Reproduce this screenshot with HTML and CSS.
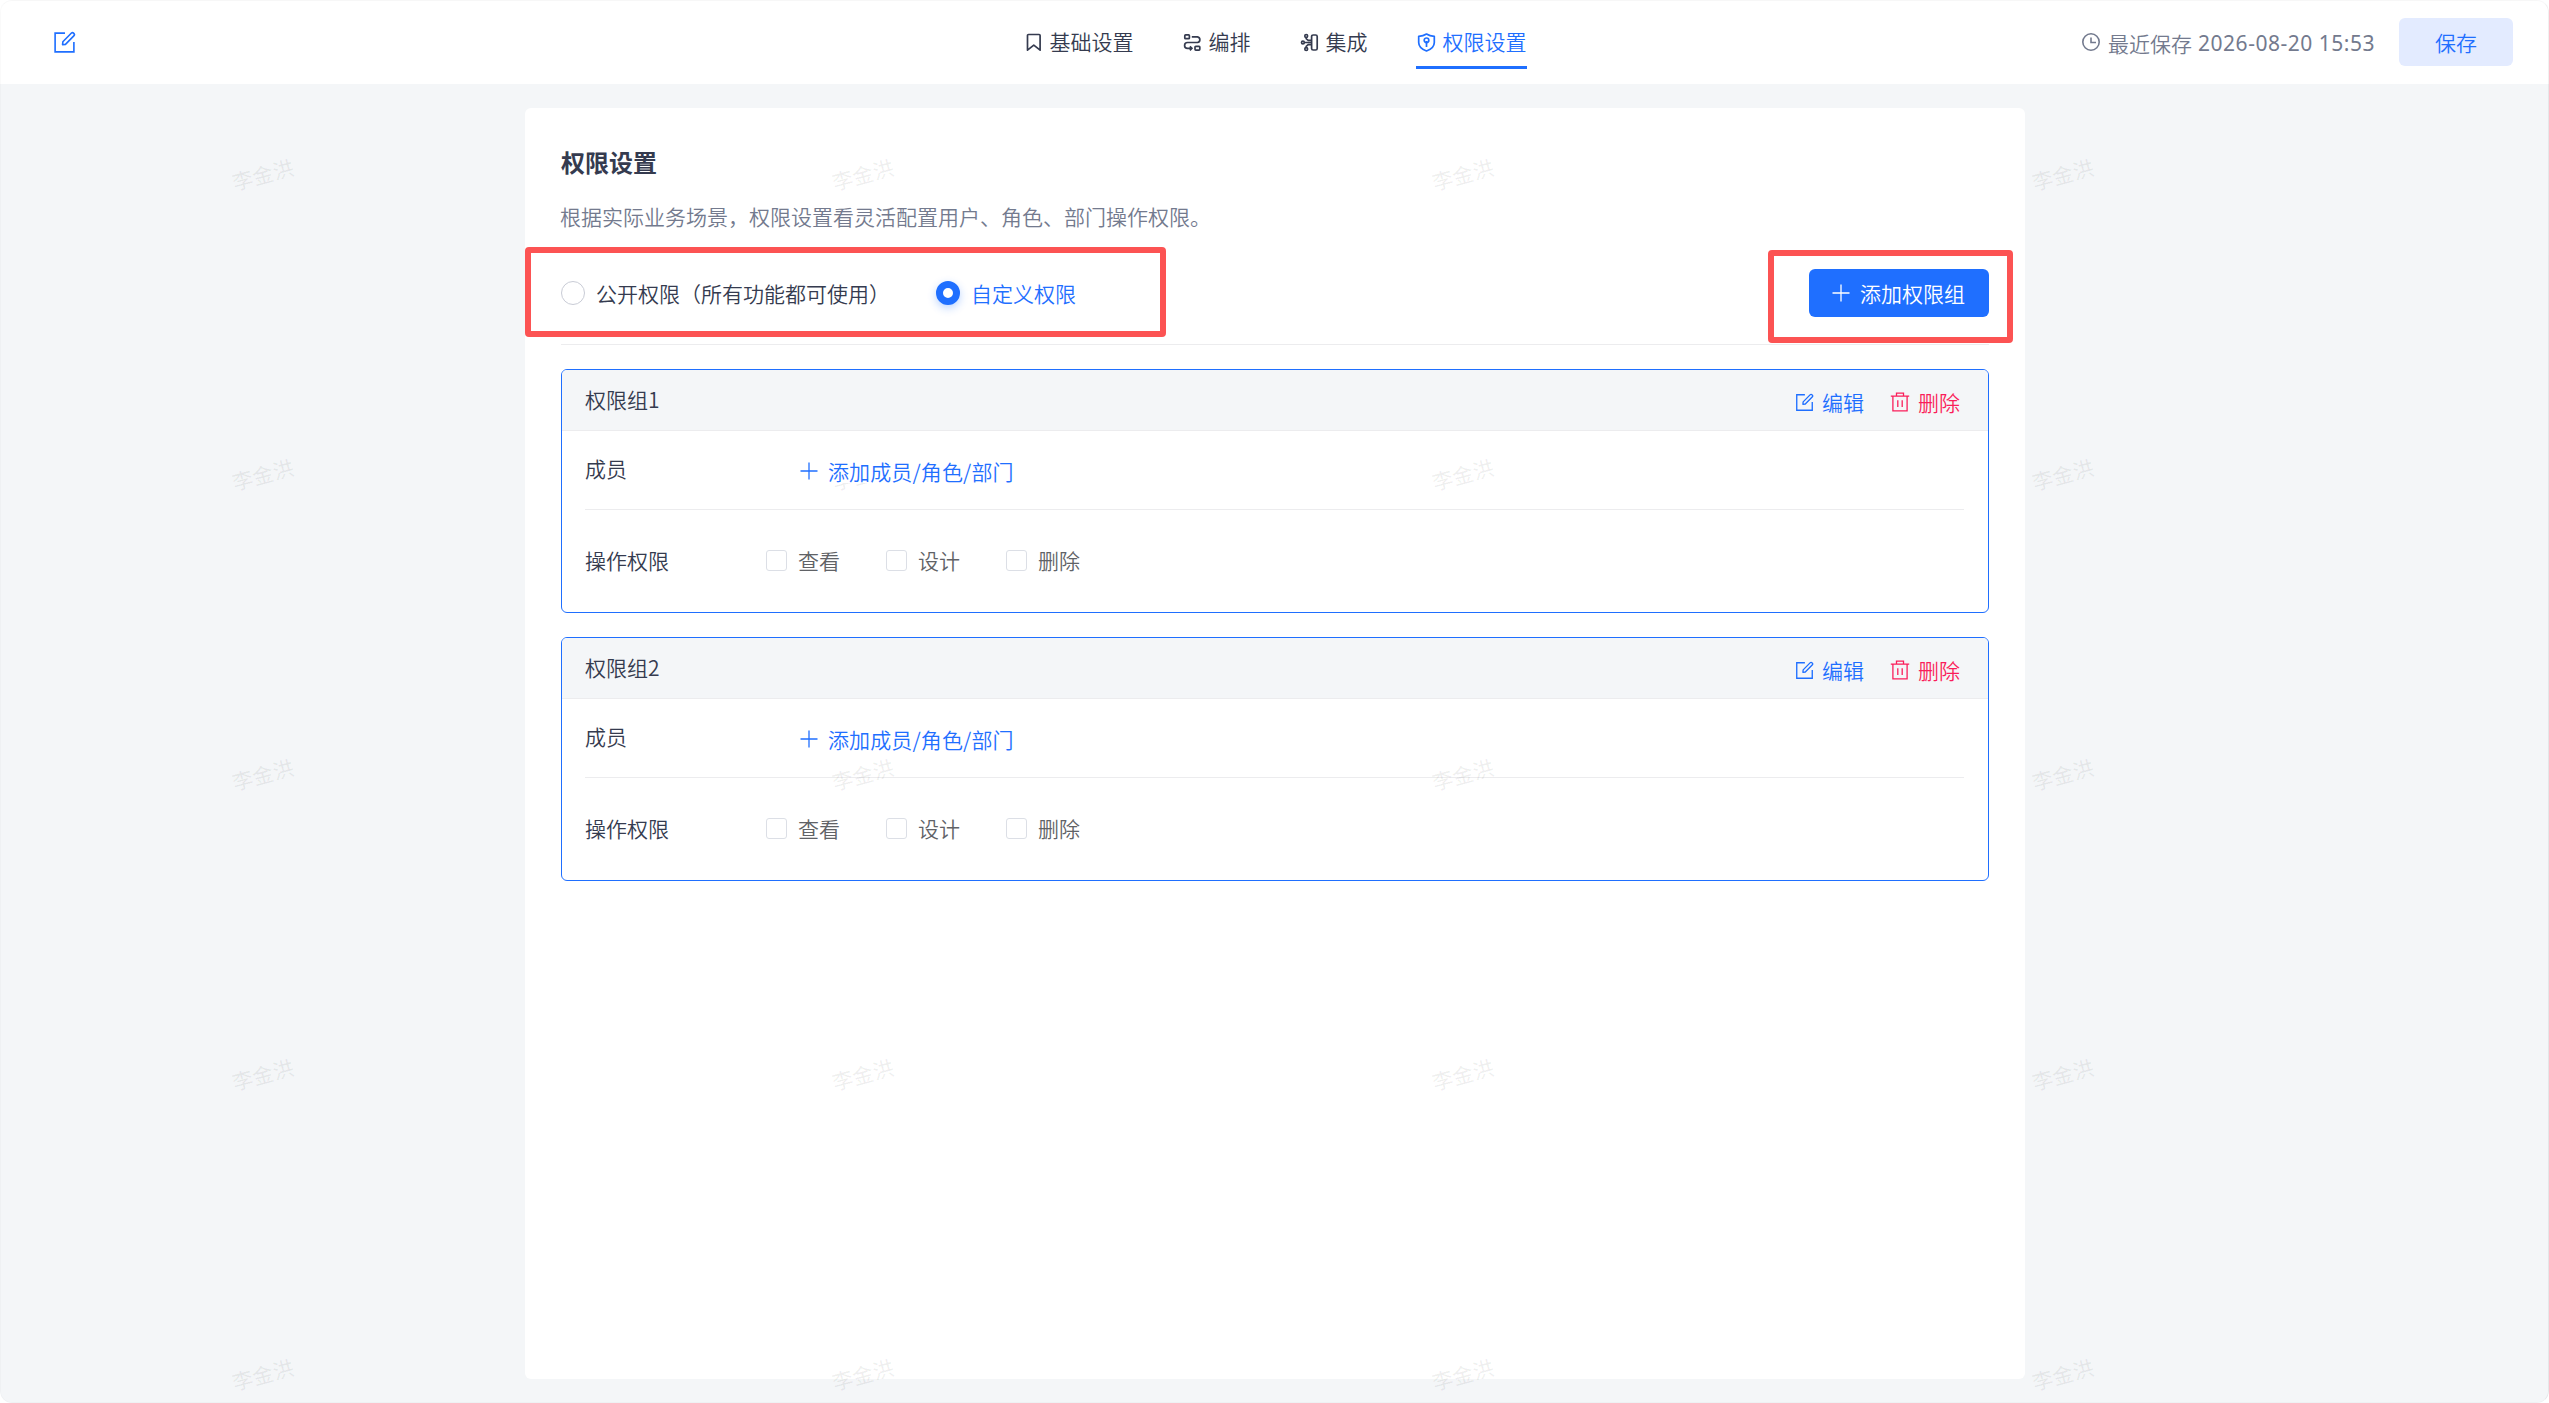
FILE: index.html
```html
<!DOCTYPE html>
<html lang="zh-CN">
<head>
<meta charset="utf-8">
<title>权限设置</title>
<link rel="stylesheet" href="styles.css">
</head>
<body>
<svg width="0" height="0" class="sprite" aria-hidden="true">
  <symbol id="edit" viewBox="0 0 24 24" fill="none" stroke="currentColor" stroke-width="1.7">
    <path d="M12.500 2.200H2.200v19.600h19.600V11.500"/>
    <path d="M10 14.200l.3-3L19 2.400a1.900 1.900 0 0 1 2.700 2.700L13 13.900z" stroke-linejoin="round"/>
  </symbol>
  <symbol id="trash" viewBox="0 0 20 20" fill="none" stroke="currentColor" stroke-width="1.3">
    <path d="M.8 4.200h18.400M6.500 4V1.200h7V4M2.900 4.200v14.600h14.200V4.200M7.800 8.200v6.800M12.200 8.200v6.800"/>
  </symbol>
  <symbol id="plus" viewBox="0 0 18 18" fill="none" stroke="currentColor" stroke-width="1.300">
    <path d="M9 .5v17M.5 9h17"/>
  </symbol>
</svg>
<div class="app">
  <header class="topbar">
    <div class="topbar-left"><svg class="icon-edit-lg"><use href="#edit"/></svg></div>
    <nav class="tabs">
      <a class="tab"><svg viewBox="0 0 21 21"><path d="M4.500 3.500a1 1 0 0 1 1-1h10.600a1 1 0 0 1 1 1v14.700l-6.300-5-6.300 5z" stroke-linejoin="round"/></svg><span>基础设置</span></a>
      <a class="tab"><svg viewBox="0 0 21 21"><rect x="2.800" y="2.900" width="4.600" height="3.800" rx=".8"/><path d="M9.800 4.800h5.700a2.900 2.900 0 0 1 0 5.700h-10a2.900 2.900 0 0 0 0 5.800h3.300M7.900 14.300l2 2-2 2"/><rect x="13" y="14.300" width="4.800" height="3.800" rx=".8"/></svg><span>编排</span></a>
      <a class="tab"><svg viewBox="0 0 21 21"><rect x="12.600" y="3" width="5.600" height="15" rx="1.600"/><circle cx="7.200" cy="3.900" r="1.400"/><circle cx="3.900" cy="10.500" r="1.400"/><circle cx="7.200" cy="17.100" r="1.400"/><path d="M5.300 10.500h7.300M7.200 5.300v1.400l2 1.600h3.400M7.200 15.700v-1.400l2-1.600h3.400"/></svg><span>集成</span></a>
      <a class="tab active"><svg viewBox="0 0 21 21"><path d="M10.500 2c2.300 1.500 4.800 2.200 7.800 2.300v6.200c0 4-3.100 6.800-7.800 8.500-4.700-1.700-7.800-4.500-7.800-8.500V4.300c3-.1 5.500-.8 7.800-2.300z" stroke-linejoin="round"/><circle cx="10.500" cy="8.300" r="2.300"/><path d="M10.500 9v6"/></svg><span>权限设置</span></a>
    </nav>
    <div class="topbar-right">
      <svg class="icon-clock" viewBox="0 0 18 18"><circle cx="9" cy="9" r="8.200"/><path d="M9 4.500v5h5"/></svg>
      <span class="saved">最近保存 <span class="date">2026-08-20 15:53</span></span>
      <button class="save">保存</button>
    </div>
  </header>
  <main class="panel">
    <h1>权限设置</h1>
    <p class="desc">根据实际业务场景，权限设置看灵活配置用户、角色、部门操作权限。</p>
    <div class="toolbar">
      <label class="radio"><i></i><span>公开权限（所有功能都可使用）</span></label>
      <label class="radio checked"><i></i><span>自定义权限</span></label>
      <button class="add"><svg><use href="#plus"/></svg><span>添加权限组</span></button>
      <div class="mark mark-radio"></div>
      <div class="mark mark-add"></div>
    </div>
    <section class="group">
      <div class="group-head">
        <span class="name">权限组1</span>
        <a class="act edit"><svg><use href="#edit"/></svg><span>编辑</span></a>
        <a class="act del"><svg><use href="#trash"/></svg><span>删除</span></a>
      </div>
      <div class="row members"><span class="label">成员</span><a class="link"><svg><use href="#plus"/></svg><span>添加成员/角色/部门</span></a></div>
      <div class="row ops"><span class="label">操作权限</span>
        <label class="check"><i></i><span>查看</span></label><label class="check"><i></i><span>设计</span></label><label class="check"><i></i><span>删除</span></label>
      </div>
    </section>
    <section class="group">
      <div class="group-head">
        <span class="name">权限组2</span>
        <a class="act edit"><svg><use href="#edit"/></svg><span>编辑</span></a>
        <a class="act del"><svg><use href="#trash"/></svg><span>删除</span></a>
      </div>
      <div class="row members"><span class="label">成员</span><a class="link"><svg><use href="#plus"/></svg><span>添加成员/角色/部门</span></a></div>
      <div class="row ops"><span class="label">操作权限</span>
        <label class="check"><i></i><span>查看</span></label><label class="check"><i></i><span>设计</span></label><label class="check"><i></i><span>删除</span></label>
      </div>
    </section>
  </main>
  <div class="watermark" aria-hidden="true">
    <span>李金洪</span><span>李金洪</span><span>李金洪</span><span>李金洪</span>
    <span>李金洪</span><span>李金洪</span><span>李金洪</span><span>李金洪</span>
    <span>李金洪</span><span>李金洪</span><span>李金洪</span><span>李金洪</span>
    <span>李金洪</span><span>李金洪</span><span>李金洪</span><span>李金洪</span>
    <span>李金洪</span><span>李金洪</span><span>李金洪</span><span>李金洪</span>
  </div>
</div>
</body>
</html>
```
FILE: styles.css
```css
* { box-sizing: border-box; }
body {
  margin: 0;
  background: #fff;
  color: #353b4f;
  font: 350 21px/30px "Noto Sans CJK SC", "Noto Sans", sans-serif;
}
svg { display: block; flex: none; fill: none; stroke: currentColor; }
.sprite { position: absolute; }
button { border: 0; padding: 0; font: inherit; }
.app {
  position: relative;
  height: 1403px;
  border-radius: 12px;
  background: #f4f6f8;
  overflow: hidden;
}
.app::after {
  content: "";
  position: absolute;
  inset: 0;
  border: 1px solid rgba(0, 0, 0, .06);
  border-left-color: rgba(0, 0, 0, .02);
  border-top-color: rgba(0, 0, 0, .03);
  border-bottom-color: rgba(0, 0, 0, .02);
  border-radius: 12px;
  pointer-events: none;
}
.topbar {
  display: grid;
  grid-template-columns: 1023px auto 1fr;
  height: 84px;
  background: #fff;
}
.topbar-left { padding: 31px 0 0 53px; color: #1f6fff; }
.icon-edit-lg { width: 23px; height: 23px; }
.tabs { display: flex; gap: 48px; }
.tab {
  display: flex;
  align-items: center;
  gap: 6px;
  height: 69px;
  padding-top: 15px;
  border-bottom: 3px solid transparent;
}
.tab svg { width: 21px; height: 21px; stroke-width: 1.7; margin-top: 3px; }
.tab.active { color: #1f6fff; border-bottom-color: #1f6fff; }
.tab span { margin-left: -.5px; margin-right: .5px; }
.topbar-right {
  display: flex;
  align-items: center;
  justify-content: flex-end;
  padding-right: 36px;
  color: #737a8e;
}
.icon-clock { width: 18px; height: 18px; stroke-width: 1.6; margin-right: 8px; }
.saved { display: flex; gap: 6px; padding-top: 1px; width: 291px; white-space: nowrap; }
.date { font-family: "Noto Sans", sans-serif; font-weight: 400; letter-spacing: .52px; }
.save { width: 114px; height: 48px; border-radius: 6px; background: #e3ebff; color: #1f6fff; }
.panel {
  width: 1500px;
  height: 1271px;
  margin: 24px 0 0 525px;
  padding: 37px 36px 0;
  border-radius: 6px;
  background: #fff;
}
h1 { margin: 0; font-size: 24px; line-height: 34px; font-weight: 700; }
.desc { margin: 22px 0 0; color: #737a8e; text-indent: -1px; }
.toolbar {
  position: relative;
  display: flex;
  align-items: center;
  height: 114px;
  padding: 38px 0 27px;
  margin-bottom: 24px;
  border-bottom: 1px solid #ececee;
}
.toolbar > * { flex: none; }
.radio { display: flex; align-items: center; gap: 12px; margin-right: 46px; }
.radio i { width: 24px; height: 24px; border: 1px solid #c9ccd6; border-radius: 50%; background: #fff; }
.radio.checked { color: #1f6fff; }
.radio.checked i { border: 7px solid #1f6fff; box-shadow: 0 3px 8px rgba(31, 111, 255, .3); }
.radio span { margin-left: -1px; }
.add {
  display: flex;
  align-items: center;
  gap: 10px;
  width: 180px;
  height: 48px;
  margin-left: auto;
  padding-left: 23px;
  border-radius: 6px;
  background: #1f6fff;
  color: #fff;
}
.add svg, .link svg { width: 18px; height: 18px; }
.mark { position: absolute; border: 6px solid #fc5353; border-radius: 4px; }
.mark-radio { left: -36px; top: 16px; width: 641px; height: 90px; }
.mark-add { left: 1207px; top: 19px; width: 245px; height: 93px; }
.group {
  height: 244px;
  margin-bottom: 24px;
  border: 1px solid #1f6fff;
  border-radius: 6px;
  overflow: hidden;
}
.group-head {
  display: flex;
  align-items: center;
  height: 61px;
  padding: 0 27px 2px 23px;
  border-bottom: 1px solid #ececee;
  background: #f4f6f8;
}
.name { margin-right: auto; }
.act { display: flex; align-items: center; margin-left: 24px; padding-top: 6px; }
.edit { color: #1f6fff; }
.edit svg { width: 19px; height: 19px; margin-right: 8px; }
.edit span { margin-right: 2px; }
.del { color: #fa1e5a; }
.del svg { width: 20px; height: 20px; margin: 0 8px 0 0; }
.del span { margin-right: 1px; }
.row { display: flex; align-items: center; margin: 0 24px 0 23px; }
.label { flex: none; width: 181px; }
.members { height: 79px; padding-bottom: 3px; border-bottom: 1px solid #ececee; }
.members .label { padding-bottom: 2px; }
.link {
  position: relative;
  z-index: 2;
  display: flex;
  align-items: center;
  gap: 10px;
  height: 24px;
  margin: 5px 0 0 34px;
  background: #fff;
  color: #1f6fff;
  letter-spacing: .12px;
}
.ops { height: 102px; padding-bottom: 2px; }
.check { display: flex; align-items: center; gap: 11px; width: 120px; color: #606266; }
.check i { width: 21px; height: 21px; border: 1px solid #dcdfe6; border-radius: 3px; background: #fff; }
.watermark {
  position: absolute;
  z-index: 1;
  left: -38px;
  top: 24px;
  display: grid;
  grid-template-columns: repeat(4, 600px);
  grid-auto-rows: 300px;
  place-items: center;
  color: rgba(0, 0, 0, .06);
  font-weight: 500;
  pointer-events: none;
}
.watermark span { transform: rotate(-15deg); }
```
